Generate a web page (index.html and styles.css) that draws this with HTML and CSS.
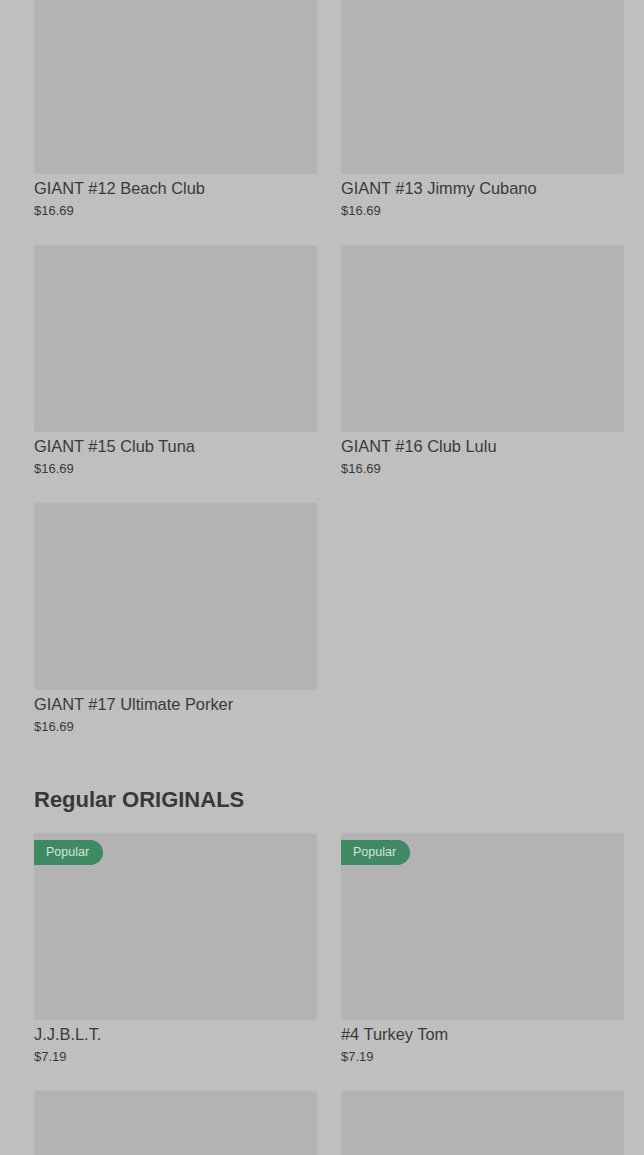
FILE: index.html
```html
<!DOCTYPE html>
<html lang="en">
<head>
    <meta charset="UTF-8">
    <title>Menu</title>
    <link rel="stylesheet" href="styles.css">
</head>
<body>

<div class="page">
    <div class="grid first">
        <div class="card">
            <div class="pic"></div>
            <div class="name">GIANT #12 Beach Club</div>
            <div class="price">$16.69</div>
        </div>
        <div class="card">
            <div class="pic"></div>
            <div class="name">GIANT #13 Jimmy Cubano</div>
            <div class="price">$16.69</div>
        </div>
        <div class="card">
            <div class="pic"></div>
            <div class="name">GIANT #15 Club Tuna</div>
            <div class="price">$16.69</div>
        </div>
        <div class="card">
            <div class="pic"></div>
            <div class="name">GIANT #16 Club Lulu</div>
            <div class="price">$16.69</div>
        </div>
        <div class="card">
            <div class="pic"></div>
            <div class="name">GIANT #17 Ultimate Porker</div>
            <div class="price">$16.69</div>
        </div>
    </div>

    <h2 class="section">Regular ORIGINALS</h2>

    <div class="grid">
        <div class="card">
            <div class="pic"><span class="badge">Popular</span></div>
            <div class="name">J.J.B.L.T.</div>
            <div class="price">$7.19</div>
        </div>
        <div class="card">
            <div class="pic"><span class="badge">Popular</span></div>
            <div class="name">#4 Turkey Tom</div>
            <div class="price">$7.19</div>
        </div>
        <div class="card">
            <div class="pic"></div>
        </div>
        <div class="card">
            <div class="pic"></div>
        </div>
    </div>
</div>

</body>
</html>
```

FILE: styles.css
```css
html, body { margin: 0; background: #bfbfbf; overflow: hidden; }
body { font-family: "Liberation Sans", Arial, sans-serif; color: #3a3a3a; }
.page { padding: 0 20px 0 34px; margin-top: -13px; }
.grid { display: grid; grid-template-columns: 283px 283px; column-gap: 24px; row-gap: 25px; }
.card { display: flex; flex-direction: column; }
.pic { position: relative; height: 187px; background: #b3b3b3; border-radius: 2px; }
.name { margin-top: 4px; font-size: 16.4px; line-height: 20px; }
.price { margin-top: 4px; font-size: 13px; line-height: 18px; }
.section { margin: 50px 0 19px; font-size: 22px; line-height: 28px; font-weight: bold; color: #383838; }
.badge { position: absolute; left: 0; top: 7px; height: 25px; line-height: 25px; padding: 0 14px 0 12px; background: #3f8a63; color: #d5e4da; font-size: 12.5px; border-radius: 0 13px 13px 0; }
```
